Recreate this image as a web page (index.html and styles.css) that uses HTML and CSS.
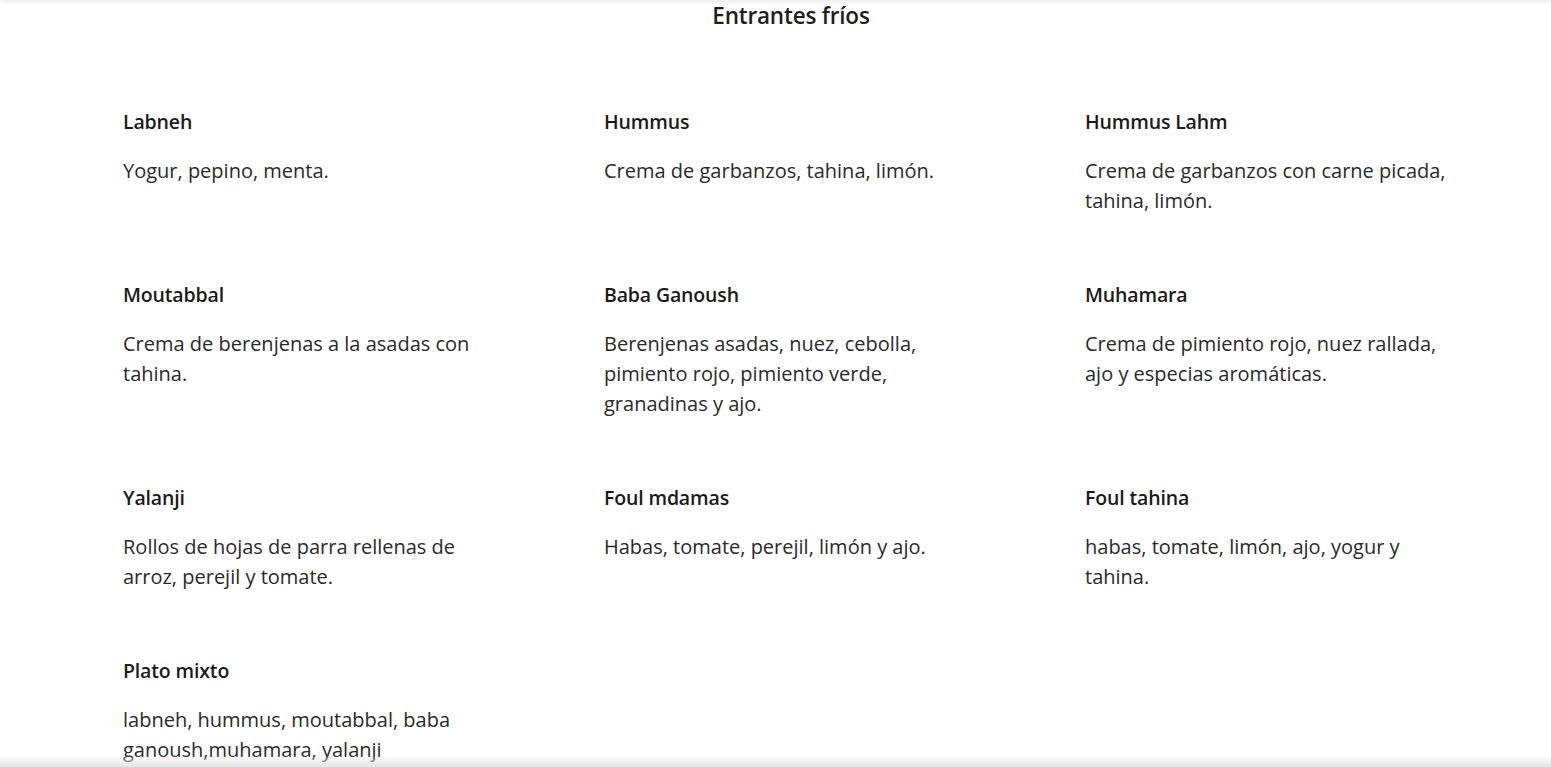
FILE: index.html
```html
<!DOCTYPE html>
<html lang="es">
<head>
<meta charset="utf-8">
<title>Entrantes fríos</title>
<link rel="stylesheet" href="styles.css">
</head>
<body>
<div class="topshade"></div>
<main class="menu">
  <h2 class="menu-title">Entrantes fríos</h2>
  <div class="menu-grid">
    <div class="dish"><h3 class="dish-name">Labneh</h3><p class="dish-desc">Yogur, pepino, menta.</p></div>
    <div class="dish"><h3 class="dish-name">Hummus</h3><p class="dish-desc">Crema de garbanzos, tahina, limón.</p></div>
    <div class="dish"><h3 class="dish-name">Hummus Lahm</h3><p class="dish-desc">Crema de garbanzos con carne picada, tahina, limón.</p></div>
    <div class="dish"><h3 class="dish-name">Moutabbal</h3><p class="dish-desc">Crema de berenjenas a la asadas con tahina.</p></div>
    <div class="dish"><h3 class="dish-name">Baba Ganoush</h3><p class="dish-desc">Berenjenas asadas, nuez, cebolla, pimiento rojo, pimiento verde, granadinas y ajo.</p></div>
    <div class="dish"><h3 class="dish-name">Muhamara</h3><p class="dish-desc">Crema de pimiento rojo, nuez rallada, ajo y especias aromáticas.</p></div>
    <div class="dish"><h3 class="dish-name">Yalanji</h3><p class="dish-desc">Rollos de hojas de parra rellenas de arroz, perejil y tomate.</p></div>
    <div class="dish"><h3 class="dish-name">Foul mdamas</h3><p class="dish-desc">Habas, tomate, perejil, limón y ajo.</p></div>
    <div class="dish"><h3 class="dish-name">Foul tahina</h3><p class="dish-desc">habas, tomate, limón, ajo, yogur y tahina.</p></div>
    <div class="dish"><h3 class="dish-name">Plato mixto</h3><p class="dish-desc">labneh, hummus, moutabbal, baba ganoush,muhamara, yalanji</p></div>
  </div>
</main>
<div class="bottomshade"></div>
</body>
</html>
```
FILE: styles.css
```css
html, body {
  margin: 0;
  padding: 0;
  background: #ffffff;
}
body {
  font-family: "Open Sans", "Noto Sans", sans-serif;
  color: #222222;
  height: 767px;
  overflow: hidden;
}
.topshade {
  height: 0;
  box-shadow: 0 0 5px 1px rgba(0, 0, 0, 0.18);
}
.menu {
  display: flex;
  flex-direction: column;
}
.menu-title {
  margin: 0;
  padding-left: 31px;
  text-align: center;
  font-size: 22.5px;
  font-weight: 600;
  letter-spacing: -0.2px;
  line-height: 32px;
  color: #1e1e1e;
}
.menu-grid {
  margin-top: 78px;
  padding-left: 123px;
  display: grid;
  grid-template-columns: repeat(3, 481px);
  row-gap: 67px;
}
.dish-name {
  margin: 0;
  font-size: 19.5px;
  font-weight: 600;
  letter-spacing: -0.15px;
  line-height: 24px;
  color: #1a1a1a;
}
.dish-desc {
  margin: 22px 0 0;
  max-width: 372px;
  font-size: 20px;
  font-weight: 400;
  line-height: 30px;
  color: #2a2a2a;
}
.bottomshade {
  position: fixed;
  left: 0;
  right: 0;
  bottom: 0;
  height: 12px;
  background: linear-gradient(to bottom, rgba(235, 235, 235, 0), rgba(228, 228, 228, 1));
}
```
